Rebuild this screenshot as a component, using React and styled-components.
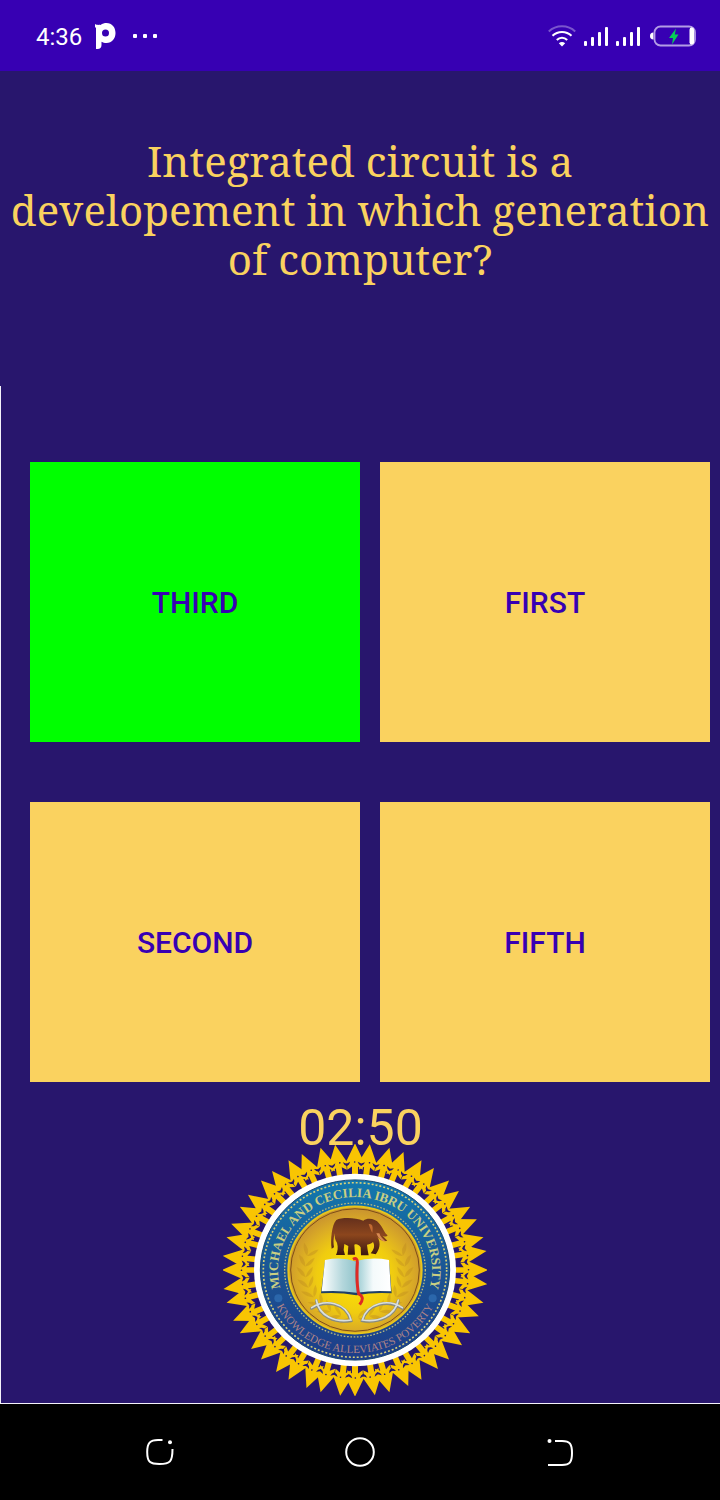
import React from "react";
import styled, { createGlobalStyle } from "styled-components";

const GlobalStyle = createGlobalStyle`
  *, *::before, *::after { box-sizing: border-box; }
  body { margin: 0; background: #28166d; }
`;

const Screen = styled.div`
  display: flex;
  flex-direction: column;
  min-height: 100vh;
  background: #28166d;
  color: #fad25f;
  font-family: Roboto, sans-serif;
`;

const StatusBar = styled.header`
  display: flex;
  align-items: center;
  justify-content: space-between;
  height: 71px;
  padding: 0 24px 0 36px;
  background: #3700b3;
  color: #fff;
`;

const StatusGroup = styled.div`
  display: flex;
  align-items: center;
  gap: ${(p) => p.$gap}px;
`;

const Clock = styled.time`
  font-size: 24px;
  line-height: 28px;
  padding-top: 2px;
`;

const Icon = styled.svg`
  display: block;
  flex: none;
`;

const QuestionPanel = styled.section`
  min-height: 315px;
  padding: 65px 10px 0;
`;

const Question = styled.h1`
  margin: 0;
  font-family: "Noto Serif", "DejaVu Serif Condensed", "DejaVu Serif", serif;
  font-size: 42px;
  font-weight: 400;
  line-height: 49px;
  text-align: center;
`;

const AnswerPanel = styled.main`
  flex: 1;
  display: flex;
  flex-direction: column;
  padding-top: 76px;
  border-left: 1px solid #f4f2fa;
  border-bottom: 1px solid #f4f2fa;
`;

const AnswerGrid = styled.div`
  display: grid;
  grid-template-columns: 1fr 1fr;
  gap: 60px 20px;
  padding: 0 10px 0 29px;
`;

const Answer = styled.button`
  height: 280px;
  padding: 2px 0 0;
  border: 0;
  border-radius: 0;
  background: ${(p) => (p.$correct ? "#00ff00" : "#fad25f")};
  color: #3700b3;
  font-family: Roboto, sans-serif;
  font-size: 30px;
  font-weight: 500;
  line-height: 36px;
  text-transform: uppercase;
  cursor: pointer;
`;

const Timer = styled.p`
  margin: 30px 0 0;
  font-size: 50px;
  line-height: 32px;
  text-align: center;
`;

const SealRow = styled.div`
  display: flex;
  justify-content: center;
  padding: 0 12px 7px 0;
`;

const SealText = styled.text`
  font-family: "Liberation Serif", serif;
  font-size: ${(p) => p.$size}px;
  font-weight: ${(p) => (p.$bold ? 700 : 400)};
  fill: ${(p) => p.$color};
  text-anchor: middle;
`;

const NavBar = styled.nav`
  display: grid;
  grid-template-columns: repeat(3, 1fr);
  height: 96px;
  padding: 0 60px;
  background: #000;
`;

const NavButton = styled.button`
  display: flex;
  align-items: center;
  justify-content: center;
  padding: 0;
  border: 0;
  background: none;
  color: #fff;
  cursor: pointer;
`;

const PIcon = () => (
  <Icon width="22" height="26" viewBox="0 0 22 26" aria-hidden="true">
    <path
      fill="#fff"
      fillRule="evenodd"
      d="M0 1 C2 2.400 4 1.600 5.500 2 C7.500.500 9.500 0 11.500 0 C17 0 20.500 4.400 20.500 10 C20.500 15.600 17 20 11.500 20 C9.500 20 8 19.500 6.500 18.700 V22 C6.500 24.500 5 26 2.500 26 H1 V5 L0 4 Z M10.500 6.500 A3.500 3.500 0 1 0 10.500 13.500 A3.500 3.500 0 1 0 10.500 6.500 Z"
    />
  </Icon>
);

const MoreIcon = () => (
  <Icon width="24" height="4" viewBox="0 0 24 4" fill="#fff" aria-hidden="true">
    <rect x="0" y="0" width="4" height="4" rx="1" />
    <rect x="10" y="0" width="4" height="4" rx="1" />
    <rect x="20" y="0" width="4" height="4" rx="1" />
  </Icon>
);

const WifiIcon = () => (
  <Icon width="28" height="22" viewBox="0 0 28 22" fill="none" stroke="#fff" strokeWidth="2" aria-hidden="true">
    <path d="M.8 6.500 C8-.500 20-.500 27.200 6.500" stroke="#7a55cd" />
    <path d="M4.500 10.800 C9.800 5.600 18.200 5.600 23.500 10.800" />
    <path d="M8.800 15 C11.800 12 16.200 12 19.200 15" />
    <path d="M10.800 18.200 C12.800 16.600 15.200 16.600 17.200 18.200 L14 21.500 Z" fill="#fff" stroke="none" />
  </Icon>
);

const SignalIcon = () => (
  <Icon width="24" height="20" viewBox="0 0 24 20" fill="#fff" aria-hidden="true">
    <rect x="0" y="15" width="3" height="5" rx="1" />
    <rect x="7" y="11" width="3" height="9" rx="1" />
    <rect x="14" y="6" width="3" height="14" rx="1" />
    <rect x="21" y="1" width="3" height="19" rx="1" />
  </Icon>
);

const BatteryIcon = () => (
  <Icon width="48" height="22" viewBox="-2 0 48 22" aria-hidden="true">
    <path d="M3.500 7.500 C1 7.500 0 9 0 11 C0 13 1 14.500 3.500 14.500 Z" fill="#fff" />
    <rect x="4.500" y="1.500" width="40.500" height="19" rx="6" fill="none" stroke="#b39de5" strokeWidth="1.800" />
    <rect x="39.500" y="2.500" width="4.500" height="17" rx="2.200" fill="#fff" />
    <path d="M26 3.500 L19 13 H23 L22 19.500 L28.500 9.500 H24.800 Z" fill="#06cf57" />
  </Icon>
);

const RecentsIcon = () => (
  <Icon width="30" height="30" viewBox="0 0 30 30" fill="none" stroke="currentColor" strokeWidth="2" aria-hidden="true">
    <path d="M17.500 3 H13 C5 3 2.200 6 2.200 15 C2.200 25 5 27 14.500 27 C25 27 27.500 25 27.500 12" />
    <circle cx="25" cy="5.200" r="2" fill="currentColor" stroke="none" />
  </Icon>
);

const HomeIcon = () => (
  <Icon width="30" height="30" viewBox="0 0 30 30" fill="none" stroke="currentColor" strokeWidth="2" aria-hidden="true">
    <circle cx="15" cy="15" r="13.800" />
  </Icon>
);

const BackIcon = () => (
  <Icon width="30" height="30" viewBox="0 0 30 30" fill="none" stroke="currentColor" strokeWidth="2" aria-hidden="true">
    <path d="M10 4 H17 C25 4 27 7 27 16 C27 25 25 28 17 28 H3" />
    <circle cx="4.500" cy="4" r="2" fill="currentColor" stroke="none" />
  </Icon>
);

const RAYS = Array.from({ length: 48 }, (_, i) => i * 7.5 - (i % 2 ? 1.1 : 0));
const GAPS = RAYS.map((angle, i) => (angle + (i === 47 ? 360 : RAYS[i + 1])) / 2);
const LEAVES = Array.from({ length: 9 }, (_, i) => 18 - i * 13);

const Laurel = () => (
  <g fill="#b9851f" opacity="0.35">
    {LEAVES.map((angle) => (
      <g key={angle} transform={`rotate(${angle})`}>
        <path d="M-150 2 Q-168-8-172-34 Q-151-24-150 2 Z" />
        <path d="M-150 2 Q-143-18-124-28 Q-128-4-150 2 Z" />
      </g>
    ))}
  </g>
);

const UniversitySeal = () => (
  <Icon width="264" height="252" viewBox="0 0 264 252" role="img" aria-label="Michael and Cecilia Ibru University">
    <defs>
      <linearGradient id="band" x1="0" y1="0" x2="0" y2="1">
        <stop offset="0" stopColor="#1279ae" />
        <stop offset="0.5" stopColor="#1b5594" />
        <stop offset="1" stopColor="#1d3d89" />
      </linearGradient>
      <radialGradient id="disc" cx="0.5" cy="0.55" r="0.52">
        <stop offset="0" stopColor="#ffe600" />
        <stop offset="0.55" stopColor="#f0cc10" />
        <stop offset="0.8" stopColor="#dcae24" />
        <stop offset="1" stopColor="#cb962e" />
      </radialGradient>
      <linearGradient id="hide" x1="0" y1="0" x2="0" y2="1">
        <stop offset="0" stopColor="#65301c" />
        <stop offset="0.45" stopColor="#8c461d" />
        <stop offset="1" stopColor="#3a1710" />
      </linearGradient>
      <linearGradient id="pageLeft" x1="0" y1="0" x2="1" y2="0">
        <stop offset="0" stopColor="#ffffff" />
        <stop offset="0.6" stopColor="#b4d7dc" />
        <stop offset="1" stopColor="#90c4cb" />
      </linearGradient>
      <linearGradient id="pageRight" x1="0" y1="0" x2="1" y2="0">
        <stop offset="0" stopColor="#92c7ce" />
        <stop offset="0.5" stopColor="#f4fafb" />
        <stop offset="1" stopColor="#ffffff" />
      </linearGradient>
      <path id="nameArc" d="M132 199 A77 73 0 1 1 132.010 199" />
      <path id="mottoArc" d="M45 126 A87 83 0 0 0 219 126" />
    </defs>

    <g transform="translate(-8 -54) scale(0.33333)">
      <g transform="translate(420 540) scale(1 0.952)">
        {RAYS.map((angle) => (
          <path
            key={angle}
            transform={`rotate(${angle})`}
            fill="#f9c502"
            d="M0-399 L28-338 L24-336 L23-316 L9-326 L9-296 L-9-296 L-9-326 L-23-316 L-24-336 L-28-338 Z"
          />
        ))}
        {GAPS.map((angle) => (
          <g key={angle} transform={`rotate(${angle})`} fill="#28166d">
            <path d="M-11-341 L0-336 L11-341 L7-333 L0-328 L-7-333 Z" />
            <circle cx="-20" cy="-340" r="2.500" />
          </g>
        ))}
        <circle r="303" fill="#fff" />
        <circle r="284" fill="url(#band)" stroke="#17476d" strokeWidth="3" />
        <circle r="275" fill="none" stroke="#d9d27a" strokeWidth="5" strokeDasharray="6 6" />
        <circle r="211" fill="none" stroke="#b9bb7f" strokeWidth="4" strokeDasharray="5 5" />
        <circle r="200" fill="url(#disc)" stroke="#e7c51d" strokeWidth="6" />
        <circle r="193" fill="none" stroke="#7a4a18" strokeWidth="3" />
        <Laurel />
        <g transform="scale(-1 1)">
          <Laurel />
        </g>
      </g>

      <circle cx="190" cy="625" r="12" fill="#2b67ab" />
      <circle cx="653" cy="625" r="12" fill="#2b67ab" />

      <path
        fill="url(#hide)"
        d="M364 390 C380 382 420 382 445 392 C458 382 482 386 492 400 C505 414 508 430 518 436 C514 442 504 440 500 434 L517 452 C506 456 492 448 487 440 C500 460 492 480 482 493 L467 490 C478 478 480 466 474 456 C468 462 460 464 456 464 L458 480 L461 496 H438 L437 472 C430 462 424 462 418 464 L420 494 H398 L400 468 L388 462 L386 480 L390 495 H363 C368 484 370 472 366 458 C360 450 358 440 360 430 C354 445 355 460 357 472 L350 476 C346 450 350 405 364 390 Z"
      />
      <path d="M461 402 C474 400 474 412 472 428 C468 422 464 412 461 402 Z" fill="#c26a32" />
      <path d="M484 430 C490 446 502 456 513 455 C504 448 496 440 493 430 Z" fill="#d98b52" />

      <path d="M330 514 L318 610 Q372 606 424 616 Q476 606 530 610 L522 514 Z" fill="#1f3f66" />
      <path d="M330 510 Q382 500 420 514 L424 608 Q370 600 320 604 Z" fill="url(#pageLeft)" />
      <path d="M420 514 Q468 500 522 510 L528 604 Q476 600 424 608 Z" fill="url(#pageRight)" />
      <path
        d="M414 508 Q428 500 427 520 C425 560 426 590 431 612 C444 618 446 628 434 644"
        fill="none"
        stroke="#de2a25"
        strokeWidth="9"
      />

      <g fill="none" strokeLinecap="round">
        <g stroke="#878b83" strokeWidth="9">
          <path d="M290 655 C330 628 394 638 408 692 C360 700 312 680 304 632" />
          <path d="M562 655 C522 628 458 638 442 692 C490 700 540 680 550 632" />
        </g>
        <g stroke="#dbe0dd" strokeWidth="5">
          <path d="M290 653 C330 626 394 636 408 690 C360 698 312 678 304 630" />
          <path d="M562 653 C522 626 458 636 442 690 C490 698 540 678 550 630" />
        </g>
      </g>
    </g>

    <SealText $size={13} $bold $color="#c9cf83">
      <textPath href="#nameArc" startOffset="50%">MICHAEL AND CECILIA IBRU UNIVERSITY</textPath>
    </SealText>
    <SealText $size={11} $color="#b08487">
      <textPath href="#mottoArc" startOffset="50%">KNOWLEDGE ALLEVIATES POVERTY</textPath>
    </SealText>
  </Icon>
);

const ANSWERS = [
  { label: "Third", correct: true },
  { label: "First", correct: false },
  { label: "Second", correct: false },
  { label: "Fifth", correct: false },
];

export default function App() {
  return (
    <Screen>
      <GlobalStyle />
      <StatusBar>
        <StatusGroup $gap={13}>
          <Clock>4:36</Clock>
          <StatusGroup $gap={16}>
            <PIcon />
            <MoreIcon />
          </StatusGroup>
        </StatusGroup>
        <StatusGroup $gap={8}>
          <WifiIcon />
          <SignalIcon />
          <SignalIcon />
          <BatteryIcon />
        </StatusGroup>
      </StatusBar>
      <QuestionPanel>
        <Question>Integrated circuit is a developement in which generation of computer?</Question>
      </QuestionPanel>
      <AnswerPanel>
        <AnswerGrid>
          {ANSWERS.map((a) => (
            <Answer key={a.label} type="button" $correct={a.correct}>
              {a.label}
            </Answer>
          ))}
        </AnswerGrid>
        <Timer>02:50</Timer>
        <SealRow>
          <UniversitySeal />
        </SealRow>
      </AnswerPanel>
      <NavBar>
        <NavButton type="button" aria-label="Recent apps">
          <RecentsIcon />
        </NavButton>
        <NavButton type="button" aria-label="Home">
          <HomeIcon />
        </NavButton>
        <NavButton type="button" aria-label="Back">
          <BackIcon />
        </NavButton>
      </NavBar>
    </Screen>
  );
}
